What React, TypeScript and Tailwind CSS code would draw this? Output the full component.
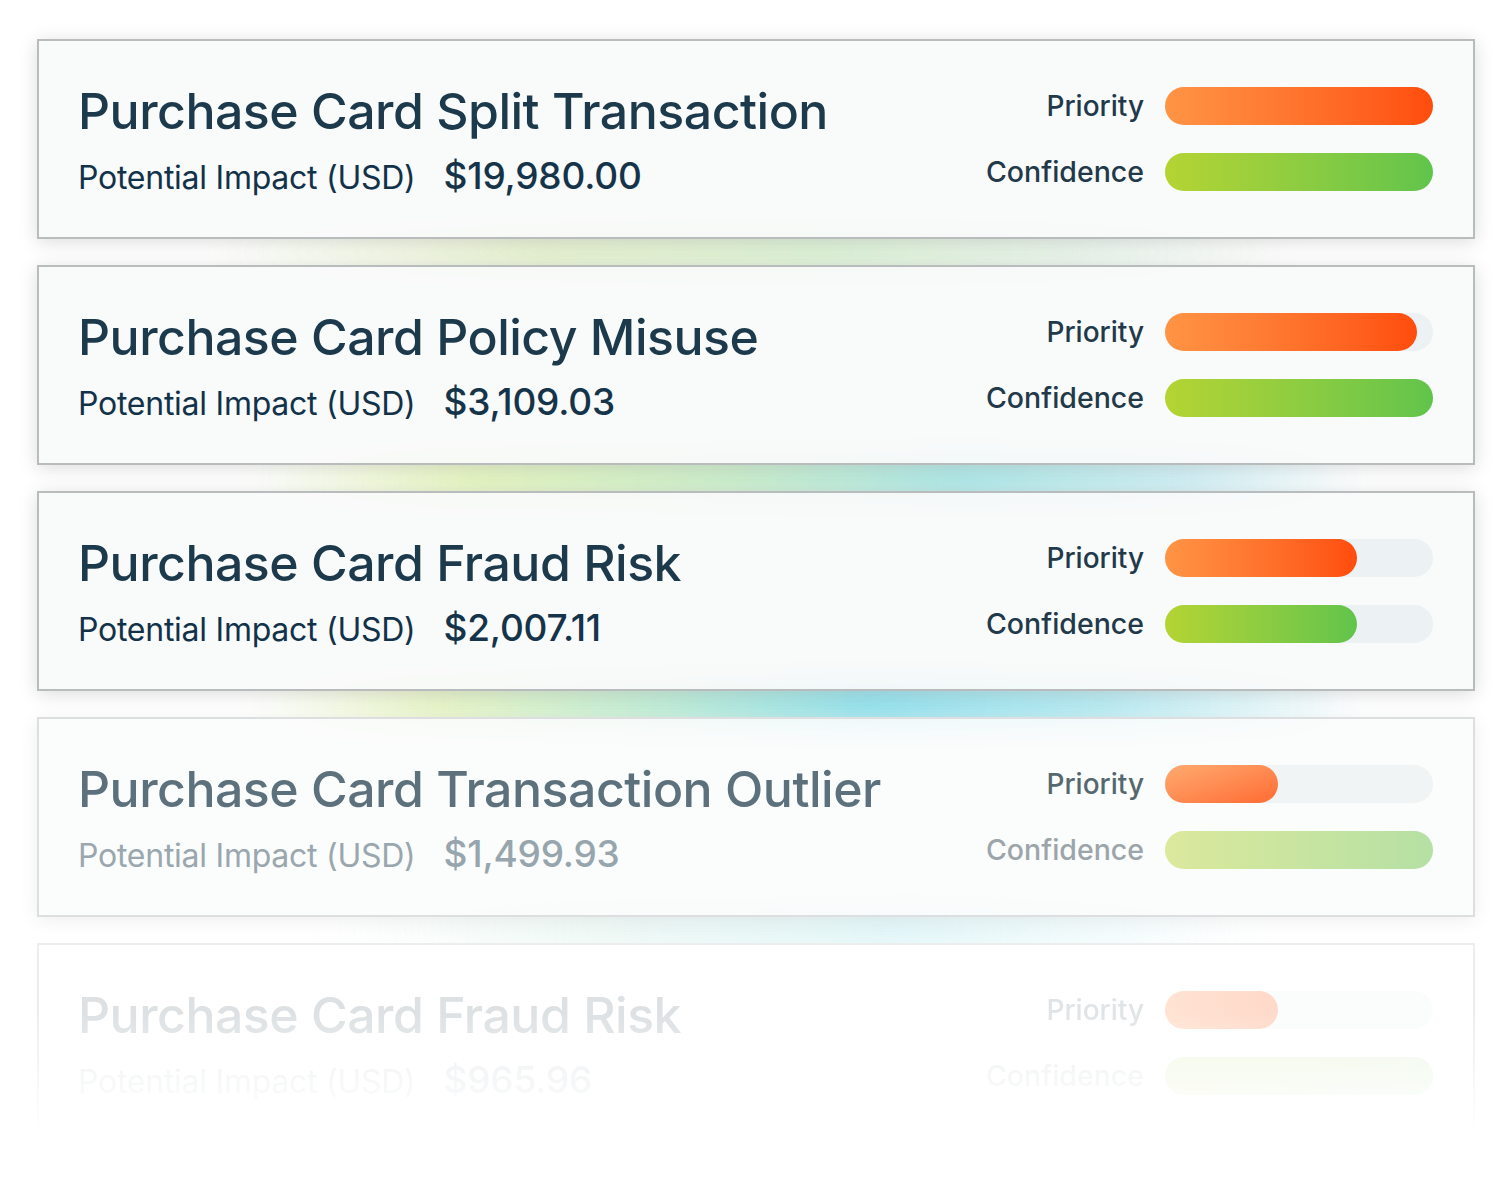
import React from 'react'

type Tone = 'full' | 'dim' | 'ghost'

interface Alert {
  title: string
  amount: string
  priority: number // bar width in px, out of 268
  confidence: number
  tone: Tone
}

const alerts: Alert[] = [
  { title: 'Purchase Card Split Transaction', amount: '$19,980.00', priority: 268, confidence: 268, tone: 'full' },
  { title: 'Purchase Card Policy Misuse', amount: '$3,109.03', priority: 252, confidence: 268, tone: 'full' },
  { title: 'Purchase Card Fraud Risk', amount: '$2,007.11', priority: 192, confidence: 192, tone: 'full' },
  { title: 'Purchase Card Transaction Outlier', amount: '$1,499.93', priority: 113, confidence: 268, tone: 'dim' },
  { title: 'Purchase Card Fraud Risk', amount: '$965.96', priority: 113, confidence: 268, tone: 'ghost' },
]

const tones = {
  full: {
    card: 'border-[#b9bcbd] bg-[#f8f9f9]/90 shadow-[0_3px_18px_rgba(0,0,0,0.14)]',
    title: 'text-[#1c3a4b]',
    label: 'text-[#12324a]',
    amount: 'text-[#15344a]',
    priority: 'text-[#22394a]',
    confidence: 'text-[#22394a]',
    pBar: 'bg-gradient-to-r from-[#ff9444] to-[#ff4c0b]',
    cBar: 'bg-gradient-to-r from-[#b4d432] to-[#60c44b]',
    track: 'bg-[#ecf1f3]',
  },
  dim: {
    card: 'border-[#dcdedf] bg-[#fafbfb]/85 shadow-[0_3px_18px_rgba(0,0,0,0.07)]',
    title: 'text-[#5d717d]',
    label: 'text-[#9aa7af]',
    amount: 'text-[#97a5ad]',
    priority: 'text-[#56686f]',
    confidence: 'text-[#9ca5aa]',
    pBar: 'bg-gradient-to-br from-[#ffaa70] to-[#ff6a30]',
    cBar: 'bg-gradient-to-r from-[#dbe99c] to-[#b5e0a4]',
    track: 'bg-[#f0f4f5]',
  },
  ghost: {
    card: 'border-[#eceeee] bg-white [mask-image:linear-gradient(to_bottom,black_35%,transparent_95%)]',
    title: 'text-[#dde1e3]',
    label: 'text-[#eceff0]',
    amount: 'text-[#e9ecee]',
    priority: 'text-[#e1e4e6]',
    confidence: 'text-[#eceeef]',
    pBar: 'bg-gradient-to-r from-[#ffe3d3] to-[#ffd9c9]',
    cBar: 'bg-gradient-to-r from-[#f3f8e4] to-[#eef8ea]',
    track: 'bg-[#fbfcfc]',
  },
}

// coloured glow that sits in the gap under each card
const glows = [
  'bg-[linear-gradient(to_right,transparent_12%,#e2efc8_35%,#d6efcf_55%,#e4f1e6_72%,transparent_88%)] opacity-90',
  'bg-[linear-gradient(to_right,transparent_15%,#e4f4bd_30%,#c9edc8_48%,#a9e6e6_64%,#cdeef4_80%,transparent_92%)]',
  'bg-[linear-gradient(to_right,transparent_15%,#e6f4c4_28%,#c0ecd2_42%,#8fe0ec_58%,#b4e9f1_74%,transparent_92%)]',
  'bg-[linear-gradient(to_right,transparent_20%,#e8f6f2_40%,#d9f3f6_60%,transparent_85%)] opacity-80',
]

function Bar({ width, fill, track }: { width: number; fill: string; track: string }) {
  return (
    <div className={`h-[38px] w-[268px] rounded-full ${track}`}>
      <div className={`h-full rounded-full ${fill}`} style={{ width }} />
    </div>
  )
}

function AlertCard({ alert }: { alert: Alert }) {
  const t = tones[alert.tone]
  return (
    <div className={`relative z-10 flex h-[200px] items-center justify-between border-2 pl-[39px] pr-[40px] ${t.card}`}>
      <div className="flex flex-col pt-[1px]">
        <h2 className={`text-[50px] leading-[60px] font-medium tracking-[-0.01em] ${t.title}`}>{alert.title}</h2>
        <div className="mt-[15px] flex items-baseline gap-[28px]">
          <span className={`text-[32px] leading-[40px] tracking-[-0.008em] ${t.label}`}>Potential Impact (USD)</span>
          <span className={`text-[37px] leading-[40px] font-medium tracking-[-0.005em] ${t.amount}`}>{alert.amount}</span>
        </div>
      </div>
      <div className="grid grid-cols-[auto_268px] items-center gap-x-[21px] gap-y-[28px]">
        <span className={`text-right text-[28px] leading-[38px] font-medium ${t.priority}`}>Priority</span>
        <Bar width={alert.priority} fill={t.pBar} track={t.track} />
        <span className={`text-right text-[28.5px] leading-[38px] font-medium ${t.confidence}`}>Confidence</span>
        <Bar width={alert.confidence} fill={t.cBar} track={t.track} />
      </div>
    </div>
  )
}

export default function App() {
  return (
    <div className="min-h-[1186px] w-[1510px] bg-white pt-[39px] pl-[37px] font-['Inter',sans-serif]">
      <div className="w-[1438px]">
        {alerts.map((a, i) => (
          <React.Fragment key={i}>
            <AlertCard alert={a} />
            {i < glows.length && (
              <div className="relative h-[26px]">
                <div className={`absolute inset-x-0 -inset-y-[10px] blur-[14px] ${glows[i]}`} />
              </div>
            )}
          </React.Fragment>
        ))}
      </div>
    </div>
  )
}
